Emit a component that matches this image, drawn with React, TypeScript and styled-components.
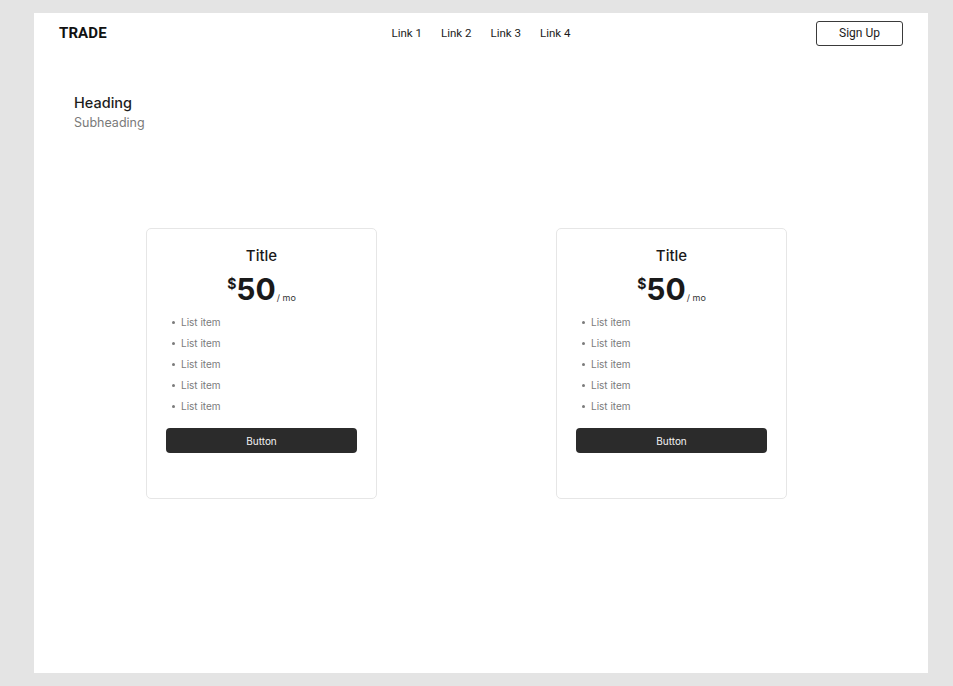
import React from "react";
import styled, { createGlobalStyle } from "styled-components";

const GlobalStyle = createGlobalStyle`
  html, body {
    margin: 0;
    padding: 0;
    background: #e4e4e4;
  }
  body {
    font-family: Inter, "Noto Sans", sans-serif;
    color: #1b1b1b;
  }
  * { box-sizing: border-box; }
`;

const Page = styled.div`
  padding: 13px 25px 13px 34px;
  min-height: 686px;
`;

const Panel = styled.div`
  background: #ffffff;
  height: 660px;
  display: flex;
  flex-direction: column;
`;

const Nav = styled.nav`
  height: 40px;
  padding: 0 25px;
  display: grid;
  grid-template-columns: 1fr auto 1fr;
  align-items: center;
`;

const Logo = styled.div`
  font-family: Roboto, "Liberation Sans", sans-serif;
  font-weight: 700;
  font-size: 15px;
  color: #111;
  letter-spacing: 0.1px;
`;

const Links = styled.ul`
  list-style: none;
  margin: 0;
  padding: 0;
  display: flex;
  gap: 19px;
`;

const NavLink = styled.li`
  font-family: Roboto, "Liberation Sans", sans-serif;
  font-size: 11.5px;
  color: #1c1c1c;
`;

const SignUp = styled.button`
  justify-self: end;
  width: 87px;
  height: 25px;
  background: #fff;
  border: 1px solid #3a3a3a;
  border-radius: 3px;
  font-family: Roboto, "Liberation Sans", sans-serif;
  font-size: 12px;
  color: #1c1c1c;
  cursor: pointer;
`;

const Intro = styled.header`
  padding: 41px 40px 0;
`;

const Heading = styled.h1`
  margin: 0;
  font-size: 14.5px;
  font-weight: 500;
  line-height: 18px;
  color: #1d1d1d;
`;

const Subheading = styled.p`
  margin: 3px 0 0;
  font-size: 12.5px;
  line-height: 16px;
  color: #7a7a7a;
`;

const Plans = styled.section`
  display: flex;
  gap: 179px;
  padding: 97px 0 0 112px;
`;

const Card = styled.article`
  width: 231px;
  height: 271px;
  border: 1px solid #e6e6e6;
  border-radius: 5px;
  padding: 17px 19px 0;
  display: flex;
  flex-direction: column;
`;

const CardTitle = styled.h2`
  margin: 0;
  text-align: center;
  font-size: 15px;
  font-weight: 500;
  line-height: 20px;
  color: #1a1a1a;
`;

const Price = styled.div`
  margin-top: 10px;
  display: flex;
  justify-content: center;
  align-items: flex-start;
  color: #1a1a1a;
  height: 34px;
`;

const Currency = styled.span`
  font-size: 14px;
  font-weight: 700;
  line-height: 14px;
  margin-top: 1px;
`;

const Amount = styled.span`
  font-size: 30px;
  font-weight: 700;
  line-height: 32px;
  margin-top: -3px;
`;

const Period = styled.span`
  font-size: 9px;
  line-height: 9px;
  margin: 17px 0 0 1px;
  color: #333;
`;

const Features = styled.ul`
  list-style: none;
  margin: 6px 0 0;
  padding: 0 0 0 6px;
  display: flex;
  flex-direction: column;
  gap: 9px;
`;

const Feature = styled.li`
  display: flex;
  align-items: center;
  gap: 6px;
  font-size: 10px;
  line-height: 12px;
  color: #7b7b7b;

  &::before {
    content: "";
    width: 3px;
    height: 3px;
    border-radius: 50%;
    background: #7b7b7b;
  }
`;

const CardButton = styled.button`
  margin-top: 16px;
  height: 25px;
  width: 100%;
  border: none;
  border-radius: 4px;
  background: #2b2b2b;
  color: #f2f2f2;
  font-family: Inter, "Noto Sans", sans-serif;
  font-size: 10px;
  cursor: pointer;
`;

const plans = [
  { id: 1, title: "Title", price: 50 },
  { id: 2, title: "Title", price: 50 },
];

const features = ["List item", "List item", "List item", "List item", "List item"];

export default function App() {
  return (
    <>
      <GlobalStyle />
      <Page>
        <Panel>
          <Nav>
            <Logo>TRADE</Logo>
            <Links>
              <NavLink>Link 1</NavLink>
              <NavLink>Link 2</NavLink>
              <NavLink>Link 3</NavLink>
              <NavLink>Link 4</NavLink>
            </Links>
            <SignUp>Sign Up</SignUp>
          </Nav>

          <Intro>
            <Heading>Heading</Heading>
            <Subheading>Subheading</Subheading>
          </Intro>

          <Plans>
            {plans.map((plan) => (
              <Card key={plan.id}>
                <CardTitle>{plan.title}</CardTitle>
                <Price>
                  <Currency>$</Currency>
                  <Amount>{plan.price}</Amount>
                  <Period>/ mo</Period>
                </Price>
                <Features>
                  {features.map((f, i) => (
                    <Feature key={i}>{f}</Feature>
                  ))}
                </Features>
                <CardButton>Button</CardButton>
              </Card>
            ))}
          </Plans>
        </Panel>
      </Page>
    </>
  );
}
